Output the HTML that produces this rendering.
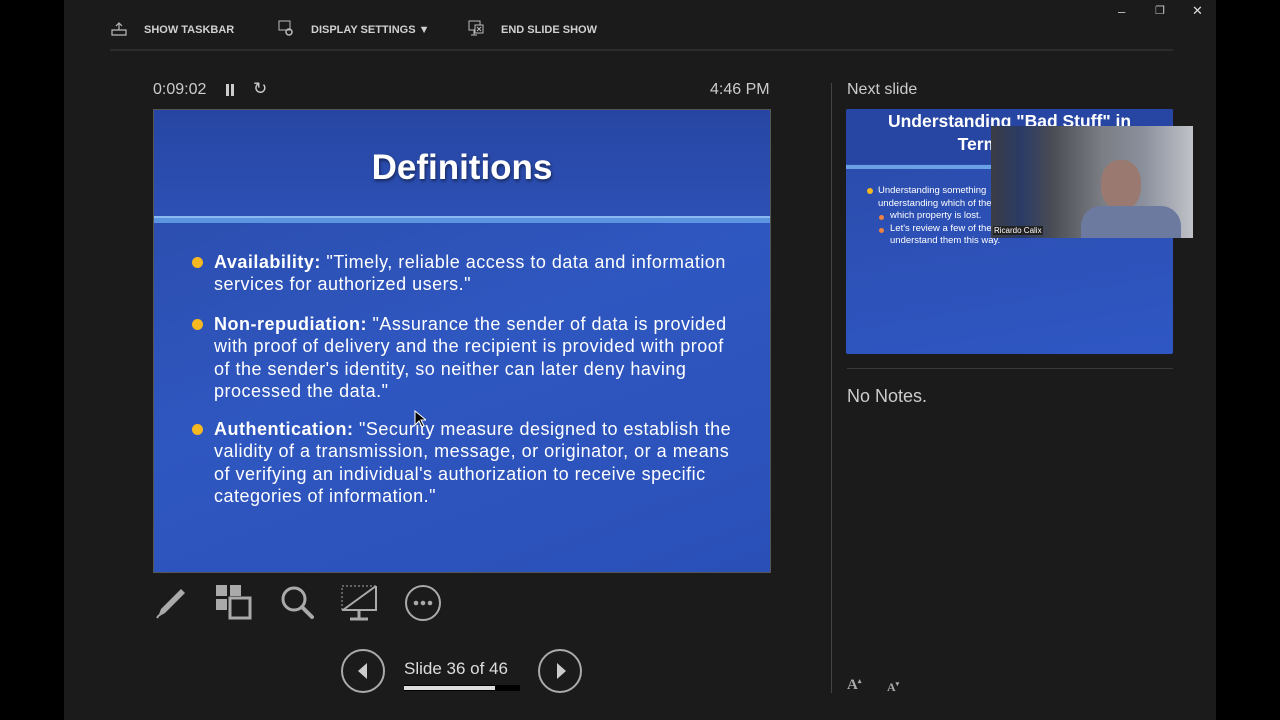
<!DOCTYPE html>
<html><head><style>
*{margin:0;padding:0;box-sizing:border-box}
body{width:1280px;height:720px;background:#000;position:relative;overflow:hidden;font-family:"Liberation Sans",sans-serif;color:#ccc}
#main{position:absolute;left:64px;top:0;width:1152px;height:720px;background:#1b1b1b}
.abs{position:absolute}
.tb{font-size:11px;font-weight:bold;color:#d0d0d0;top:24px}
.slide{left:153px;top:109px;width:618px;height:464px;background:linear-gradient(160deg,#2a4aa8 0%,#2f57c0 50%,#2a50b8 100%);border:1px solid #555}
.slide .title{position:absolute;left:0;top:0;width:100%;height:106px;background:linear-gradient(180deg,#2746a3,#2d50b5);}
.slide .bar{position:absolute;left:0;top:106px;width:100%;height:7px;background:#5b95e0;border-top:2px solid #8ab8f0}
.slide h1{position:absolute;width:100%;top:38px;text-align:center;color:#fff;font-size:35px;font-weight:bold;text-shadow:1px 2px 3px rgba(0,0,0,.5)}
.b{position:absolute;left:60px;width:560px;color:#fff;font-size:18px;letter-spacing:0.5px;line-height:22.3px;white-space:nowrap}
.b::before{content:"";position:absolute;left:-22px;top:6px;width:11px;height:11px;border-radius:50%;background:#f5b820}
.ns{position:absolute;left:846px;top:109px;width:327px;height:245px;background:linear-gradient(170deg,#2a4aa8,#2f57c4);border-radius:2px;overflow:hidden}
</style></head><body>
<div id="main"></div>
<div class="abs" style="left:1118px;top:4px;color:#ccc;font-size:13px">–</div>
<div class="abs" style="left:1155px;top:4px;color:#ccc;font-size:11px">❐</div>
<div class="abs" style="left:1192px;top:3px;color:#ddd;font-size:13px">✕</div>
<svg class="abs" style="left:111px;top:22px" width="16" height="14"><path d="M1 8h14v5H1z M8 2v6 M5 4l3-3 3 3" stroke="#bbb" fill="none" stroke-width="1.2"/></svg>
<div class="abs tb" style="left:144px">SHOW TASKBAR</div>
<svg class="abs" style="left:278px;top:20px" width="16" height="18"><rect x="1" y="1" width="11" height="9" stroke="#bbb" fill="none"/><circle cx="11" cy="12" r="3" stroke="#bbb" fill="none" stroke-width="1.5"/></svg>
<div class="abs tb" style="left:311px">DISPLAY SETTINGS ▼</div>
<svg class="abs" style="left:468px;top:20px" width="16" height="18"><rect x="1" y="1" width="11" height="9" stroke="#bbb" fill="none"/><rect x="7" y="5" width="8" height="8" stroke="#bbb" fill="#1b1b1b"/><path d="M9 7l4 4M13 7l-4 4" stroke="#bbb"/><path d="M6 10v5M3 15h6" stroke="#bbb"/></svg>
<div class="abs tb" style="left:501px">END SLIDE SHOW</div>
<div class="abs" style="left:110px;top:49px;width:1063px;height:2px;background:#2c2c2c"></div>

<div class="abs" style="left:153px;top:81px;font-size:16px;color:#ccc">0:09:02</div>
<div class="abs" style="left:226px;top:84px;width:3px;height:12px;background:#ccc;box-shadow:5px 0 0 #ccc"></div>
<div class="abs" style="left:253px;top:79px;font-size:17px;color:#ccc">↻</div>
<div class="abs" style="left:710px;top:81px;font-size:16px;color:#ccc">4:46 PM</div>

<div class="abs slide">
<div class="title"></div><div class="bar"></div>
<h1>Definitions</h1>
<div class="b" style="top:141px"><b>Availability:</b> "Timely, reliable access to data and information<br>services for authorized users."</div>
<div class="b" style="top:203px"><b>Non-repudiation:</b> "Assurance the sender of data is provided<br>with proof of delivery and the recipient is provided with proof<br>of the sender's identity, so neither can later deny having<br>processed the data."</div>
<div class="b" style="top:308px"><b>Authentication:</b> "Security measure designed to establish the<br>validity of a transmission, message, or originator, or a means<br>of verifying an individual's authorization to receive specific<br>categories of information."</div>
</div>
<svg class="abs" style="left:414px;top:410px" width="12" height="18"><path d="M1 1v14l4-4 3 6 2-1-3-6h5z" fill="#000" stroke="#fff"/></svg>

<svg class="abs" style="left:154px;top:584px" width="36" height="36"><path d="M4 33l3-8 20-20 4 4-20 20z" fill="#aaa"/><path d="M3 34l2-3" stroke="#aaa" stroke-width="2"/></svg>
<svg class="abs" style="left:214px;top:584px" width="40" height="38"><rect x="2" y="1" width="11" height="11" fill="#aaa"/><rect x="16" y="1" width="11" height="11" fill="#aaa"/><rect x="2" y="15" width="11" height="11" fill="#aaa"/><rect x="16" y="14" width="20" height="20" fill="#1b1b1b" stroke="#aaa" stroke-width="3"/></svg>
<svg class="abs" style="left:280px;top:585px" width="36" height="36"><circle cx="14" cy="14" r="11" stroke="#aaa" stroke-width="3" fill="none"/><path d="M22 22l10 10" stroke="#aaa" stroke-width="4" stroke-linecap="round"/></svg>
<svg class="abs" style="left:340px;top:584px" width="40" height="38"><rect x="2" y="2" width="34" height="24" stroke="#aaa" stroke-dasharray="2 2" fill="none"/><path d="M36 2v24H2" stroke="#aaa" stroke-width="2" fill="none"/><path d="M3 26L36 2" stroke="#aaa" stroke-width="2"/><path d="M19 26v8M10 35h18" stroke="#aaa" stroke-width="3"/></svg>
<svg class="abs" style="left:404px;top:584px" width="38" height="38"><circle cx="19" cy="19" r="17" stroke="#aaa" stroke-width="2" fill="none"/><circle cx="12" cy="19" r="2.3" fill="#aaa"/><circle cx="19" cy="19" r="2.3" fill="#aaa"/><circle cx="26" cy="19" r="2.3" fill="#aaa"/></svg>

<svg class="abs" style="left:340px;top:648px" width="48" height="46"><circle cx="23" cy="23" r="21" stroke="#aaa" stroke-width="2" fill="none"/><path d="M27 15v16l-9-8z" fill="#ccc"/></svg>
<div class="abs" style="left:404px;top:659px;font-size:17px;color:#ddd">Slide 36 of 46</div>
<div class="abs" style="left:404px;top:685px;width:116px;height:6px;background:#000"></div>
<div class="abs" style="left:404px;top:686px;width:91px;height:4px;background:#ddd"></div>
<svg class="abs" style="left:537px;top:648px" width="48" height="46"><circle cx="23" cy="23" r="21" stroke="#aaa" stroke-width="2" fill="none"/><path d="M20 15v16l9-8z" fill="#ccc"/></svg>

<div class="abs" style="left:831px;top:83px;width:1px;height:610px;background:#444"></div>
<div class="abs" style="left:847px;top:81px;font-size:16px;color:#ccc">Next slide</div>
<div class="ns">
<div style="position:absolute;left:0;top:0;width:100%;height:55px;background:#2746a3"></div>
<div style="position:absolute;left:0;top:56px;width:100%;height:4px;background:#6aa0e4"></div>
<div style="position:absolute;width:100%;top:1px;text-align:center;color:#fff;font-weight:bold;font-size:17.5px;line-height:23px">Understanding "Bad Stuff" in<br>Terms of the</div>
<div style="position:absolute;left:32px;top:76px;color:#fff;font-size:9.5px;line-height:12.5px">Understanding something<br>understanding which of the<br><span style="margin-left:12px">which property is lost.</span><br><span style="margin-left:12px">Let's review a few of the</span><br><span style="margin-left:12px">understand them this way.</span></div>
<div style="position:absolute;left:21px;top:79px;width:6px;height:6px;border-radius:50%;background:#f5b820"></div>
<div style="position:absolute;left:33px;top:106px;width:5px;height:5px;border-radius:50%;background:#f08040"></div>
<div style="position:absolute;left:33px;top:119px;width:5px;height:5px;border-radius:50%;background:#f08040"></div>
</div>
<div class="abs" style="left:991px;top:126px;width:202px;height:112px;background:linear-gradient(90deg,#3a3d44 0%,#2a3b66 15%,#4a4c54 30%,#7b7e84 55%,#8a8f9c 75%,#c0c2c8 100%)">
<div style="position:absolute;left:110px;top:34px;width:40px;height:50px;border-radius:45%;background:#9a7a70"></div>
<div style="position:absolute;left:90px;top:80px;width:100px;height:32px;background:#6c7aa0;border-radius:20px 20px 0 0"></div>
<div style="position:absolute;left:2px;top:100px;font-size:8px;color:#fff;background:#222;padding:0 1px">Ricardo Calix</div>
</div>
<div class="abs" style="left:847px;top:368px;width:326px;height:1px;background:#3a3a3a"></div>
<div class="abs" style="left:847px;top:386px;font-size:18px;color:#ccc">No Notes.</div>
<div class="abs" style="left:847px;top:677px;font-size:15px;font-weight:bold;color:#aaa;font-family:'Liberation Serif',serif">A<sup style="font-size:7px">▴</sup></div>
<div class="abs" style="left:887px;top:680px;font-size:12px;font-weight:bold;color:#aaa;font-family:'Liberation Serif',serif">A<sup style="font-size:7px">▾</sup></div>
</body></html>
